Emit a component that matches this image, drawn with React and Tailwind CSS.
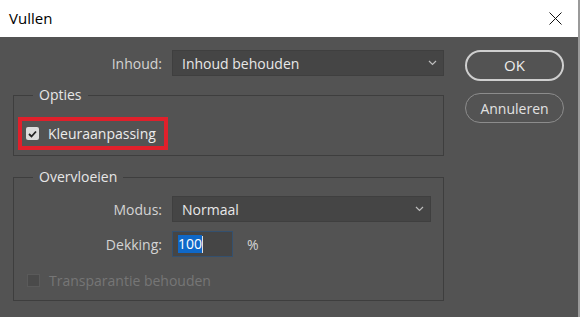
import React from "react";

// Photoshop "Vullen" (fill) dialog, dark theme
const font = { fontFamily: '"Open Sans", "Noto Sans", Arial, sans-serif' };

function Chevron() {
  return (
    <svg width="9" height="6" viewBox="0 0 9 6" className="shrink-0">
      <path d="M1 1 L4.5 4.5 L8 1" fill="none" stroke="#bdbdbd" strokeWidth="1.2" />
    </svg>
  );
}

function Select({ value, width }) {
  return (
    <div
      className="flex h-[26px] items-center justify-between border border-[#3f3f3f] bg-[#454545] pl-[9px] pr-[6px] text-[14px] text-[#e8e8e8]"
      style={{ width }}
    >
      <span>{value}</span>
      <Chevron />
    </div>
  );
}

function Group({ title, children }) {
  return (
    <fieldset className="border border-[#3e3e3e]">
      <legend className="ml-[19px] px-[6px] text-[14px] leading-[20px] text-[#e6e6e6]">
        {title}
      </legend>
      {children}
    </fieldset>
  );
}

export default function App() {
  return (
    <div className="h-[317px] w-[580px] overflow-hidden" style={font}>
      {/* Title bar */}
      <div className="flex h-[37px] items-center justify-between border-r-2 border-[#9a9a9a] bg-white pl-[9px] pr-[16px]">
        <span className="text-[15px] text-black">Vullen</span>
        <svg width="13" height="13" viewBox="0 0 13 13">
          <path d="M0.5 0.5 L12.5 12.5 M12.5 0.5 L0.5 12.5" stroke="#111" strokeWidth="1" />
        </svg>
      </div>

      {/* Body */}
      <div className="flex h-[280px] gap-[21px] border-r-2 border-[#9a9a9a] bg-[#535353] pl-[13px] pt-[13px]">
        <div className="flex w-[431px] flex-col">
          <div className="flex items-center gap-[10px]">
            <span className="w-[149px] text-right text-[14px] text-[#d4d4d4]">Inhoud:</span>
            <Select value="Inhoud behouden" width={272} />
          </div>

          <div className="mt-[9px]">
            <Group title="Opties">
              <div className="mb-[5px] ml-[4px] mt-[12px] flex h-[33px] w-[150px] items-center gap-[9px] border-4 border-[#e0202b] pl-[4px]">
                <span className="flex h-[13px] w-[13px] items-center justify-center rounded-[2px] bg-[#dcdcdc]">
                  <svg width="9" height="8" viewBox="0 0 9 8">
                    <path d="M1 4 L3.5 6.5 L8 1.5" fill="none" stroke="#222" strokeWidth="1.8" />
                  </svg>
                </span>
                <span className="text-[14px] text-[#ececec]">Kleuraanpassing</span>
              </div>
            </Group>
          </div>

          <div className="mt-[11px]">
            <Group title="Overvloeien">
              <div className="mt-[9px] flex items-center gap-[10px]">
                <span className="w-[148px] text-right text-[14px] text-[#d4d4d4]">Modus:</span>
                <Select value="Normaal" width={259} />
              </div>
              <div className="mt-[9px] flex items-center gap-[10px]">
                <span className="w-[148px] text-right text-[14px] text-[#d4d4d4]">Dekking:</span>
                <div className="flex h-[26px] w-[61px] items-center border border-[#34506e] bg-[#454545] pl-[5px]">
                  <span className="bg-[#0f68c8] text-[14px] leading-[18px] text-white">100</span>
                  <span className="h-[17px] w-px bg-[#e0e0e0]" />
                </div>
                <span className="ml-[4px] text-[14px] text-[#d4d4d4]">%</span>
              </div>
              <div className="mb-[10px] mt-[13px] flex h-[20px] items-center gap-[9px] pl-[13px]">
                <span className="h-[13px] w-[13px] border border-[#5a5a5a] bg-[#4a4a4a]" />
                <span className="text-[14px] text-[#767676]">Transparantie behouden</span>
              </div>
            </Group>
          </div>
        </div>

        <div className="flex w-[99px] flex-col gap-[12px]">
          <button className="h-[31px] rounded-full border-2 border-[#cfcfcf] text-[15px] text-[#ededed]">
            OK
          </button>
          <button className="h-[30px] rounded-full border border-[#8c8c8c] text-[14px] text-[#e2e2e2]">
            Annuleren
          </button>
        </div>
      </div>
    </div>
  );
}
